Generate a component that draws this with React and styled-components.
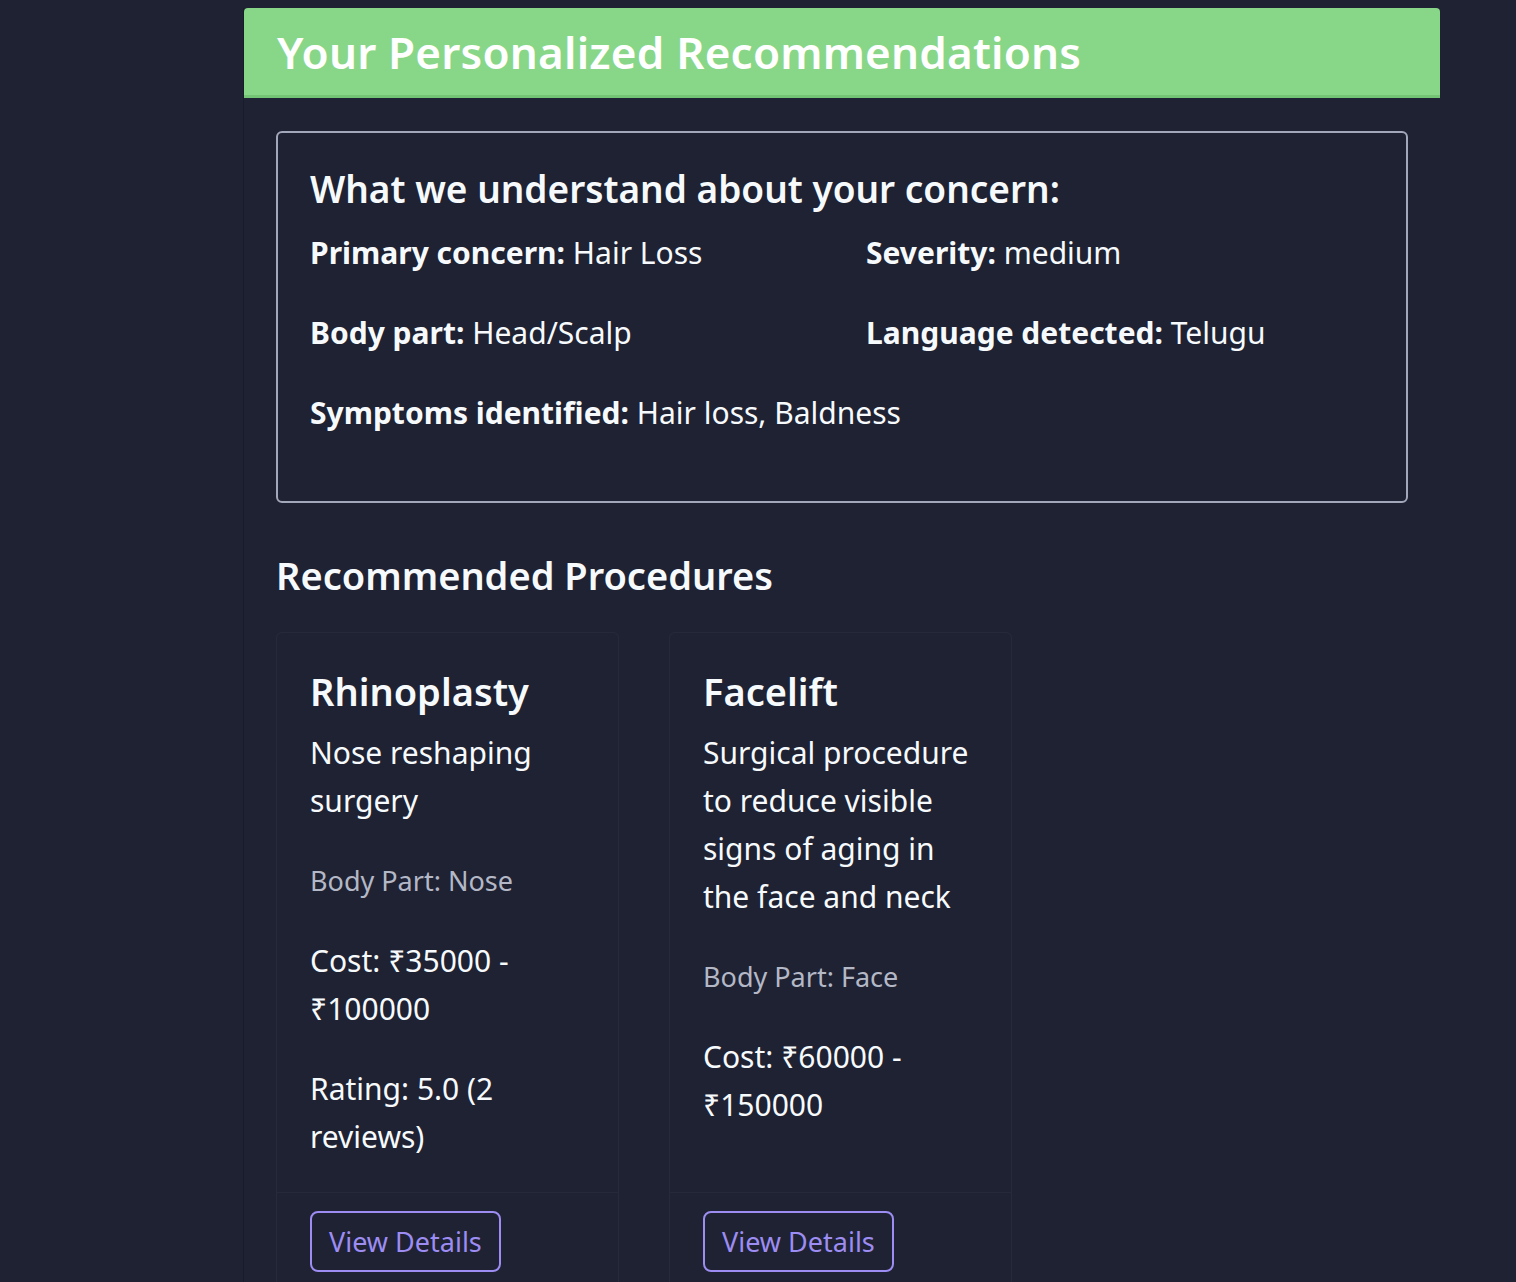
import React from "react";
import styled, { createGlobalStyle } from "styled-components";

const GlobalStyle = createGlobalStyle`
  html, body {
    background-color: #1e2233;
  }
  body {
    margin: 8px;
    font-family: "Noto Sans", "Open Sans", sans-serif;
    color: #f7fafc;
  }
  * {
    box-sizing: border-box;
  }
`;

const St = {
  Page: styled.main`
    padding-left: 235px;
  `,
  Panel: styled.section`
    width: 1197px;
    border-left: 1px solid rgba(0, 0, 0, 0.18);
    min-height: 1300px;
  `,
  Header: styled.header`
    height: 90px;
    display: flex;
    align-items: center;
    padding-left: 33px;
    background-color: #88d788;
    border-bottom: 3px solid #74c476;
    border-radius: 4px 4px 0 0;
  `,
  Title: styled.h1`
    margin: 0;
    font-size: 44px;
    font-weight: 600;
    color: #ffffff;
    letter-spacing: 0.2px;
  `,
  Content: styled.div`
    padding: 33px 32px 0 32px;
  `,
  ConcernBox: styled.div`
    border: 2px solid #a3a7ba;
    border-radius: 6px;
    padding: 30px 32px 65px 32px;
  `,
  BoxHeading: styled.h2`
    margin: 0 0 15px 0;
    font-size: 37px;
    font-weight: 600;
    line-height: 52px;
  `,
  InfoGrid: styled.div`
    display: grid;
    grid-template-columns: 1fr 1fr;
    column-gap: 48px;
    row-gap: 34px;
  `,
  InfoItem: styled.p`
    margin: 0;
    font-size: 30px;
    line-height: 46px;
    grid-column: ${({ wide }) => (wide ? "1 / -1" : "auto")};
  `,
  Label: styled.strong`
    font-weight: 700;
  `,
  SectionTitle: styled.h2`
    margin: 44px 0 29px 0;
    font-size: 38px;
    font-weight: 600;
    line-height: 56px;
  `,
  CardGrid: styled.div`
    display: grid;
    grid-template-columns: repeat(3, 343px);
    column-gap: 50px;
  `,
  Card: styled.article`
    display: flex;
    flex-direction: column;
    border: 1px solid rgba(255, 255, 255, 0.035);
    border-bottom: none;
    border-radius: 6px 6px 0 0;
  `,
  CardBody: styled.div`
    flex: 1;
    padding: 32px 32px 31px 33px;
    border-bottom: 1px solid rgba(255, 255, 255, 0.035);
  `,
  CardTitle: styled.h3`
    margin: 0 0 12px 0;
    font-size: 38px;
    font-weight: 600;
    line-height: 52px;
  `,
  CardText: styled.p`
    margin: 0 0 32px 0;
    font-size: ${({ muted }) => (muted ? "27px" : "30px")};
    line-height: 48px;
    color: ${({ muted }) => (muted ? "#b4b8c6" : "#f7fafc")};
    &:last-child {
      margin-bottom: 0;
    }
  `,
  CardFooter: styled.div`
    padding: 18px 32px 10px 33px;
  `,
  DetailsButton: styled.button`
    height: 61px;
    padding: 0 17px;
    background: transparent;
    border: 2px solid #9d8cf2;
    border-radius: 8px;
    color: #9d8cf2;
    font-family: inherit;
    font-size: 27px;
    cursor: pointer;
  `,
};

const concerns = [
  { label: "Primary concern:", value: "Hair Loss" },
  { label: "Severity:", value: "medium" },
  { label: "Body part:", value: "Head/Scalp" },
  { label: "Language detected:", value: "Telugu" },
  { label: "Symptoms identified:", value: "Hair loss, Baldness", wide: true },
];

const procedures = [
  {
    name: "Rhinoplasty",
    description: "Nose reshaping surgery",
    bodyPart: "Nose",
    cost: "₹35000 - ₹100000",
    rating: "Rating: 5.0 (2 reviews)",
  },
  {
    name: "Facelift",
    description: "Surgical procedure to reduce visible signs of aging in the face and neck",
    bodyPart: "Face",
    cost: "₹60000 - ₹150000",
  },
];

const App = () => {
  return (
    <St.Page>
      <GlobalStyle />
      <St.Panel>
        <St.Header>
          <St.Title>Your Personalized Recommendations</St.Title>
        </St.Header>
        <St.Content>
          <St.ConcernBox>
            <St.BoxHeading>What we understand about your concern:</St.BoxHeading>
            <St.InfoGrid>
              {concerns.map((item) => (
                <St.InfoItem key={item.label} wide={item.wide}>
                  <St.Label>{item.label}</St.Label> {item.value}
                </St.InfoItem>
              ))}
            </St.InfoGrid>
          </St.ConcernBox>

          <St.SectionTitle>Recommended Procedures</St.SectionTitle>
          <St.CardGrid>
            {procedures.map((proc) => (
              <St.Card key={proc.name}>
                <St.CardBody>
                  <St.CardTitle>{proc.name}</St.CardTitle>
                  <St.CardText>{proc.description}</St.CardText>
                  <St.CardText muted>Body Part: {proc.bodyPart}</St.CardText>
                  <St.CardText>Cost: {proc.cost}</St.CardText>
                  {proc.rating && <St.CardText>{proc.rating}</St.CardText>}
                </St.CardBody>
                <St.CardFooter>
                  <St.DetailsButton>View Details</St.DetailsButton>
                </St.CardFooter>
              </St.Card>
            ))}
          </St.CardGrid>
        </St.Content>
      </St.Panel>
    </St.Page>
  );
};

export default App;
